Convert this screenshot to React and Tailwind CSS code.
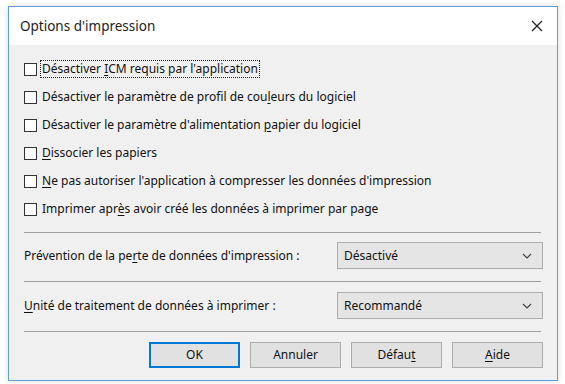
import React from 'react';

const font = { fontFamily: '"Noto Sans", "Open Sans", sans-serif' };

// underline for the accelerator letter
const U = ({ children }) => <span className="underline underline-offset-2">{children}</span>;

const Checkbox = ({ label, focused }) => (
  <div className="flex h-[28px] items-center">
    <div className="h-[13px] w-[13px] border border-[#333] bg-white" />
    <span
      className={`ml-[3px] px-[1px] leading-[16px] ${
        focused ? 'border border-dotted border-[#222]' : 'border border-transparent'
      }`}
    >
      {label}
    </span>
  </div>
);

const Select = ({ value }) => (
  <div className="flex h-[27px] w-[206px] items-center justify-between border border-[#adadad] bg-[#e5e5e5] pl-[6px] pr-[10px]">
    <span>{value}</span>
    <svg width="10" height="6" viewBox="0 0 10 6" className="text-[#444]">
      <path d="M1 1l4 4 4-4" fill="none" stroke="currentColor" strokeWidth="1.2" />
    </svg>
  </div>
);

const Separator = () => <div className="mr-[2px] border-t border-[#a0a0a0] border-b-white" />;

const Button = ({ children, primary }) => (
  <button
    className={`h-[26px] w-[91px] bg-[#e1e1e1] text-[#111] ${
      primary ? 'border-2 border-[#0078d7]' : 'border border-[#adadad]'
    }`}
  >
    {children}
  </button>
);

export default function App() {
  return (
    <div className="h-[384px] w-[565px] bg-white pl-[8px] pt-[6px]" style={font}>
      <div className="flex h-[375px] w-[550px] flex-col border border-[#5b9fdd] bg-[#f0f0f0] text-[12px] text-[#111] shadow-[0_0_6px_rgba(0,0,0,0.15)]">
        {/* Title bar */}
        <div className="flex h-[38px] items-center justify-between bg-white pl-[11px] pr-[14px]">
          <span className="text-[13.5px] text-[#222]">Options d'impression</span>
          <svg width="12" height="12" viewBox="0 0 12 12">
            <path d="M1 1l10 10M11 1L1 11" stroke="#222" strokeWidth="1.3" />
          </svg>
        </div>

        {/* Content */}
        <div className="flex flex-1 flex-col pl-[15px] pr-[14px] pt-[10px]">
          <Checkbox
            focused
            label={<>Désactiver <U>I</U>CM requis par l'application</>}
          />
          <Checkbox label={<>Désactiver le paramètre de profil de cou<U>l</U>eurs du logiciel</>} />
          <Checkbox label={<>Désactiver le paramètre d'alimentation <U>p</U>apier du logiciel</>} />
          <Checkbox label={<><U>D</U>issocier les papiers</>} />
          <Checkbox label={<><U>N</U>e pas autoriser l'application à compresser les données d'impression</>} />
          <Checkbox label={<>Imprimer apr<U>è</U>s avoir créé les données à imprimer par page</>} />

          <div className="mt-[9px]">
            <Separator />
          </div>
          <div className="mt-[9px] flex items-center justify-between">
            <span>Prévention de la pe<U>r</U>te de données d'impression :</span>
            <Select value="Désactivé" />
          </div>
          <div className="mt-[12px]">
            <Separator />
          </div>
          <div className="mt-[10px] flex items-center justify-between">
            <span><U>U</U>nité de traitement de données à imprimer :</span>
            <Select value="Recommandé" />
          </div>
          <div className="mt-[12px]">
            <Separator />
          </div>
          <div className="mt-[10px] flex justify-end gap-[10px]">
            <Button primary>OK</Button>
            <Button>Annuler</Button>
            <Button>Défau<U>t</U></Button>
            <Button><U>A</U>ide</Button>
          </div>
        </div>
      </div>
    </div>
  );
}
